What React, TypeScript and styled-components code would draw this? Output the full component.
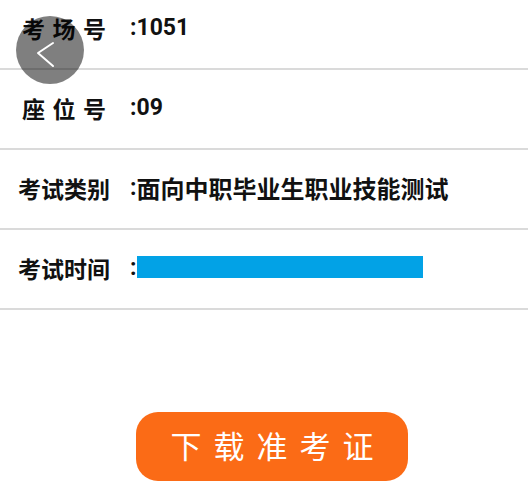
import React from "react";
import styled, { createGlobalStyle } from "styled-components";

const GlobalStyle = createGlobalStyle`
  html, body {
    margin: 0;
    padding: 0;
    background: #ffffff;
    font-family: "Noto Sans CJK SC", "Noto Sans", sans-serif;
  }
`;

const Page = styled.div`
  position: relative;
  width: 528px;
  height: 500px;
  overflow: hidden;
  background: #fff;
`;

const InfoList = styled.div`
  margin-top: -10px;
`;

const Row = styled.div`
  height: 80px;
  display: flex;
  align-items: center;
  padding-left: 18px;
  padding-bottom: 3px;
  border-bottom: 2px solid #dadada;
  box-sizing: border-box;
  font-size: 23px;
  color: #111;
`;

const Label = styled.span<{ spaced?: boolean }>`
  width: ${(p) => (p.spaced ? "84px" : "92px")};
  margin-left: ${(p) => (p.spaced ? "4px" : "0")};
  margin-right: ${(p) => (p.spaced ? "24px" : "20px")};
  font-weight: 700;
  text-align: justify;
  text-align-last: justify;
  white-space: nowrap;
`;

const Value = styled.span`
  font-weight: 700;
  font-family: "Roboto", "Noto Sans CJK SC", sans-serif;
  font-size: 23px;
  display: flex;
  align-items: center;
  white-space: nowrap;

  .cjk {
    font-family: "Noto Sans CJK SC", sans-serif;
    font-size: 24px;
  }
`;

const Masked = styled.span`
  display: inline-block;
  width: 286px;
  height: 22px;
  margin-left: 1px;
  margin-top: -2px;
  background: #02a2e6;
`;

const BackButton = styled.div`
  position: absolute;
  left: 16px;
  top: 16px;
  width: 68px;
  height: 68px;
  border-radius: 50%;
  background: rgba(0, 0, 0, 0.5);
  display: flex;
  align-items: center;
  justify-content: center;
`;

const Footer = styled.div`
  display: flex;
  justify-content: center;
  padding-top: 102px;
`;

const DownloadButton = styled.button`
  width: 272px;
  height: 69px;
  margin-left: 16px;
  border: none;
  border-radius: 22px;
  background: #fb6b16;
  color: #fff;
  font-family: "Noto Sans CJK SC", sans-serif;
  font-size: 31px;
  font-weight: 400;
  line-height: 1;
  letter-spacing: 12px;
  padding: 0 0 4px 12px;
  cursor: pointer;
`;

export default function App() {
  return (
    <Page>
      <GlobalStyle />
      <InfoList>
        <Row>
          <Label spaced>考场号</Label>
          <Value>:1051</Value>
        </Row>
        <Row>
          <Label spaced>座位号</Label>
          <Value>:09</Value>
        </Row>
        <Row>
          <Label>考试类别</Label>
          <Value>
            :<span className="cjk">面向中职毕业生职业技能测试</span>
          </Value>
        </Row>
        <Row>
          <Label>考试时间</Label>
          <Value>
            :<Masked />
          </Value>
        </Row>
      </InfoList>
      <Footer>
        <DownloadButton>下载准考证</DownloadButton>
      </Footer>
      <BackButton>
        <svg width="68" height="68" viewBox="0 0 68 68">
          <polyline
            points="37,27 22,37 37,50"
            fill="none"
            stroke="#ffffff"
            strokeWidth="2"
            strokeLinecap="round"
            strokeLinejoin="round"
          />
        </svg>
      </BackButton>
    </Page>
  );
}
